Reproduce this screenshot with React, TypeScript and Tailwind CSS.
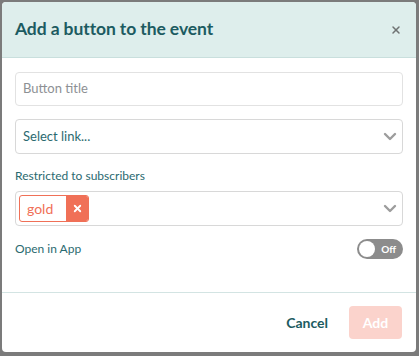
import { X } from "lucide-react";

function Chevron() {
  return (
    <svg width="14" height="9" viewBox="0 0 14 9" className="text-[#9d9d9d]">
      <path d="M2 2 L7 7 L12 2" fill="none" stroke="currentColor" strokeWidth="2.4" strokeLinecap="round" strokeLinejoin="round" />
    </svg>
  );
}

export default function App() {
  return (
    <div
      className="w-[419px] h-[356px] bg-[#7b7b7b] pt-[2px] pl-[2px]"
      style={{ fontFamily: "Lato, 'Open Sans', sans-serif" }}
    >
      <div className="w-[414px] h-[350px] bg-white rounded-[4px] overflow-hidden flex flex-col">
        {/* Header */}
        <div className="h-[56px] bg-[#deeeec] border-b border-[#c9dfdd] flex items-center justify-between pl-[13px] pr-[14px] shrink-0">
          <h1 className="text-[17.5px] font-bold text-[#1c5b61] tracking-[-0.1px]">Add a button to the event</h1>
          <X className="w-[12px] h-[12px] text-[#6f7373]" strokeWidth={3} />
        </div>

        {/* Body */}
        <div className="flex-1 px-[13px] pt-[14px] flex flex-col">
          <div className="h-[34px] border border-[#e2e2e2] rounded-[4px] flex items-center px-[7px]">
            <span className="text-[13px] text-[#8d9094]">Button title</span>
          </div>

          <div className="mt-[13px] h-[35px] border border-[#d8d8d8] rounded-[4px] flex items-center justify-between pl-[7px] pr-[5px]">
            <span className="text-[13px] text-[#2b6a70]">Select link...</span>
            <Chevron />
          </div>

          <div className="mt-[14px] text-[12px] text-[#2b6a70] leading-[16px]">Restricted to subscribers</div>

          <div className="mt-[7px] h-[35px] border border-[#d8d8d8] rounded-[4px] flex items-center justify-between pl-[3px] pr-[5px]">
            <div className="flex h-[27px] rounded-[3px] border border-[#f07057] overflow-hidden">
              <span className="pl-[7px] pr-[13px] flex items-center text-[14px] text-[#f07057]">gold</span>
              <span className="w-[22px] bg-[#f07057] flex items-center justify-center">
                <X className="w-[11px] h-[11px] text-white" strokeWidth={4} />
              </span>
            </div>
            <Chevron />
          </div>

          <div className="mt-[13px] flex items-center justify-between">
            <span className="text-[12px] text-[#2b6a70]">Open in App</span>
            <div className="w-[46px] h-[20px] rounded-full bg-[#8c8c8c] flex items-center justify-between pl-[2px] pr-[7px]">
              <span className="w-[16px] h-[16px] rounded-full bg-white" />
              <span className="text-[10px] font-bold text-white">Off</span>
            </div>
          </div>
        </div>

        {/* Footer */}
        <div className="h-[60px] border-t border-[#d3e4e3] flex items-center justify-end gap-[21px] pr-[14px] shrink-0">
          <span className="text-[14px] font-bold text-[#1c5b61]">Cancel</span>
          <div className="w-[53px] h-[33px] rounded-[4px] bg-[#fbd3cc] flex items-center justify-center">
            <span className="text-[14px] font-bold text-white">Add</span>
          </div>
        </div>
      </div>
    </div>
  );
}
